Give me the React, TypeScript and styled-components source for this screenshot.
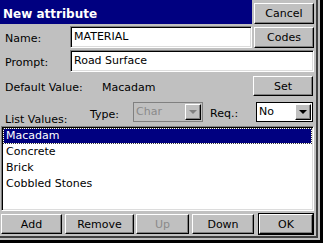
import styled, { createGlobalStyle } from 'styled-components';

const GlobalStyle = createGlobalStyle`
  html, body {
    margin: 0;
    padding: 0;
    background: #c0c0c0;
  }
  body {
    font-family: "DejaVu Sans", sans-serif;
    font-size: 11px;
    color: #000;
  }
  * { box-sizing: border-box; }
`;

// window edge: dark line, grey gap, black rim (right and bottom only)
const Edge = styled.div<{ $color: string; $size: number }>`
  width: fit-content;
  border-right: ${(p) => p.$size}px solid ${(p) => p.$color};
  border-bottom: ${(p) => p.$size}px solid ${(p) => p.$color};
`;

const Dialog = styled.div`
  width: 316px;
  height: 236px;
  background: #c0c0c0;
  display: flex;
  flex-direction: column;
  padding: 0 2px 2px 0;
`;

const Row = styled.div<{ $h: number; $top?: number }>`
  display: flex;
  align-items: center;
  height: ${(p) => p.$h}px;
  margin-top: ${(p) => p.$top ?? 0}px;
  flex-shrink: 0;
`;

const TitleBar = styled.div`
  flex: 1;
  align-self: stretch;
  background: #000080;
  color: #fff;
  font-weight: bold;
  font-size: 12px;
  padding: 3px 0 0 3px;
  display: flex;
  align-items: center;
`;

const Button = styled.button<{ $w: number; $h?: number; $ml?: number; $mr?: number; $mt?: number }>`
  width: ${(p) => p.$w}px;
  height: ${(p) => p.$h ?? 20}px;
  margin: ${(p) => p.$mt ?? 0}px ${(p) => p.$mr ?? 0}px 0 ${(p) => p.$ml ?? 0}px;
  padding: 0;
  flex-shrink: 0;
  font-family: inherit;
  font-size: 11px;
  color: #000;
  background: #c0c0c0;
  border: 1px solid;
  border-color: #fff #000 #000 #fff;
  box-shadow: inset -1px -1px 0 #808080;
  outline: none;
  &:disabled {
    color: #8a8a8a;
  }
`;

const DefaultButton = styled(Button)`
  outline: 1px solid #000;
`;

const Label = styled.div<{ $w: number; $pl?: number; $pt?: number; $stretch?: boolean }>`
  width: ${(p) => p.$w}px;
  padding-left: ${(p) => p.$pl ?? 5}px;
  padding-top: ${(p) => p.$pt ?? 2}px;
  align-self: ${(p) => (p.$stretch ? 'stretch' : 'auto')};
  white-space: nowrap;
  flex-shrink: 0;
`;

const Value = styled.div`
  flex: 1;
  padding-top: 3px;
`;

const TextInput = styled.div<{ $w?: number }>`
  ${(p) => (p.$w ? `width: ${p.$w}px;` : 'flex: 1;')}
  height: 22px;
  background: #fff;
  border: 1px solid;
  border-color: #808080 #fff #fff #808080;
  box-shadow: inset 1px 1px 0 #000, inset -1px -1px 0 #dcdcdc;
  padding: 3px 0 0 3px;
  white-space: nowrap;
  flex-shrink: 0;
`;

const Combo = styled.div<{ $w: number; $disabled?: boolean; $mr?: number }>`
  width: ${(p) => p.$w}px;
  height: 20px;
  margin: 0 ${(p) => p.$mr ?? 0}px 0 0;
  display: flex;
  border: 1px solid ${(p) => (p.$disabled ? '#808080' : '#000')};
  background: ${(p) => (p.$disabled ? '#c0c0c0' : '#fff')};
  color: ${(p) => (p.$disabled ? '#8a8a8a' : '#000')};
  flex-shrink: 0;
`;

const ComboText = styled.div`
  flex: 1;
  padding: 2px 0 0 2px;
`;

const ComboArrow = styled.div<{ $disabled?: boolean }>`
  width: 16px;
  height: 16px;
  margin: 1px;
  background: #c0c0c0;
  border: 1px solid;
  border-color: #fff #000 #000 #fff;
  box-shadow: inset -1px -1px 0 #808080;
  display: flex;
  align-items: center;
  justify-content: center;
  &::after {
    content: '';
    width: 0;
    height: 0;
    border-left: 4px solid transparent;
    border-right: 4px solid transparent;
    border-top: 4px solid ${(p) => (p.$disabled ? '#808080' : '#000')};
  }
`;

const ListBox = styled.div`
  height: 85px;
  margin: 3px 0 0 1px;
  flex-shrink: 0;
  background: #fff;
  border: 1px solid;
  border-color: #808080 #fff #fff #808080;
  box-shadow: inset 1px 1px 0 #000, inset -1px -1px 0 #dcdcdc;
  padding: 1px 1px 0 1px;
  overflow: hidden;
`;

const ListItem = styled.div<{ $selected?: boolean }>`
  height: 16px;
  line-height: 14px;
  padding-left: 2px;
  white-space: nowrap;
  border: 1px ${(p) => (p.$selected ? 'dotted #333' : 'solid transparent')};
  background: ${(p) => (p.$selected ? '#000080' : 'transparent')};
  background-clip: padding-box;
  color: ${(p) => (p.$selected ? '#fff' : '#000')};
`;

const ButtonBar = styled.div`
  display: flex;
  align-items: center;
  height: 20px;
  margin-top: 3px;
  padding-left: 1px;
  flex-shrink: 0;
`;

const items = ['Macadam', 'Concrete', 'Brick', 'Cobbled Stones'];

export default function App() {
  return (
    <>
      <GlobalStyle />
      <Edge $color="#000" $size={3}>
        <Edge $color="#c0c0c0" $size={2}>
          <Edge $color="#404040" $size={2}>
            <Dialog>
              <Row $h={24}>
                <TitleBar>New attribute</TitleBar>
                <Button $w={60} $h={21} $ml={2} $mt={2}>Cancel</Button>
              </Row>
              <Row $h={22} $top={2}>
                <Label $w={70}>Name:</Label>
                <TextInput $w={182}>MATERIAL</TextInput>
                <Button $w={60} $h={21} $ml={2}>Codes</Button>
              </Row>
              <Row $h={22} $top={2}>
                <Label $w={70}>Prompt:</Label>
                <TextInput>Road Surface</TextInput>
              </Row>
              <Row $h={20} $top={4}>
                <Label $w={102} $pt={3}>Default Value:</Label>
                <Value>Macadam</Value>
                <Button $w={60} $mr={1}>Set</Button>
              </Row>
              <Row $h={22} $top={5}>
                <Label $w={90} $pt={12} $stretch>List Values:</Label>
                <Label $w={43} $pl={0} $pt={4}>Type:</Label>
                <Combo $w={70} $disabled>
                  <ComboText>Char</ComboText>
                  <ComboArrow $disabled />
                </Combo>
                <Label $w={53} $pl={7} $pt={2}>Req.:</Label>
                <Combo $w={57} $mr={1}>
                  <ComboText>No</ComboText>
                  <ComboArrow />
                </Combo>
              </Row>
              <ListBox>
                {items.map((item, i) => (
                  <ListItem key={item} $selected={i === 0}>{item}</ListItem>
                ))}
              </ListBox>
              <ButtonBar>
                <Button $w={61} $mr={3}>Add</Button>
                <Button $w={69} $mr={2}>Remove</Button>
                <Button $w={53} $mr={3} disabled>Up</Button>
                <Button $w={62} $mr={5}>Down</Button>
                <DefaultButton $w={54}>OK</DefaultButton>
              </ButtonBar>
            </Dialog>
          </Edge>
        </Edge>
      </Edge>
    </>
  );
}
